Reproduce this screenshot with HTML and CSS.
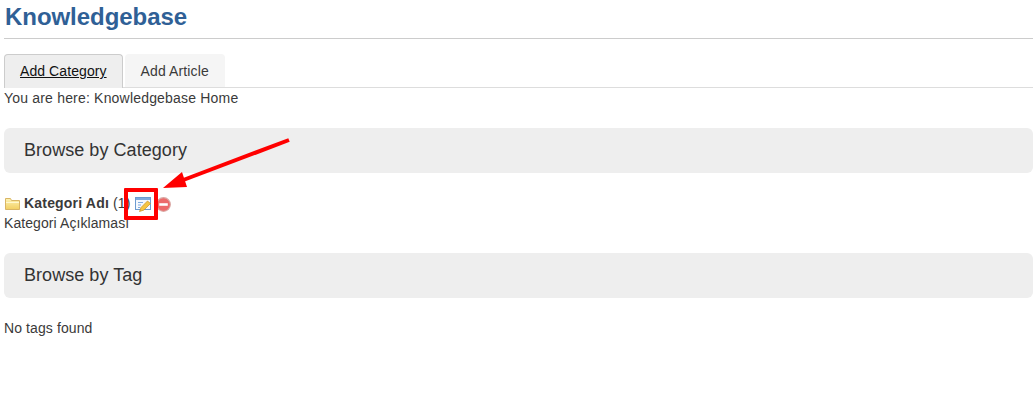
FILE: index.html
```html
<!DOCTYPE html>
<html>
<head>
  <title>Knowledgebase</title>
  <link rel="stylesheet" href="styles.css">
</head>
<body>
  <div class="page">
    <h1 class="page-title">Knowledgebase</h1>

    <ul class="tabs">
      <li class="tab active"><a href="#">Add Category</a></li>
      <li class="tab"><a href="#">Add Article</a></li>
    </ul>
    <div class="breadcrumb">You are here: Knowledgebase Home</div>

    <h2 class="section-head">Browse by Category</h2>
    <div class="category">
      <div class="category-row">
        <svg class="icon-folder" width="16" height="16" viewBox="0 0 16 16">
          <defs>
            <linearGradient id="folderFill" x1="0" y1="0" x2="0" y2="1">
              <stop offset="0" stop-color="#fdf3b4" />
              <stop offset="1" stop-color="#f2cf62" />
            </linearGradient>
          </defs>
          <path d="M1.5 3.5V14.5H15.5V5.5H7.5L6.5 3.5Z" fill="url(#folderFill)" stroke="#d9b565" />
          <path d="M2 7.5H15" stroke="#fff8d0" />
        </svg>
        <b>Kategori Adı</b>
        <span class="count">(1)</span>
        <span class="actions">
          <svg class="icon-edit" width="16" height="16" viewBox="0 0 16 16">
            <rect x="0.5" y="1.5" width="15" height="12" fill="#f4f8fd" stroke="#6b9bd0" />
            <rect x="1" y="2" width="14" height="2" fill="#7fabde" />
            <path d="M3 6.5H8M3 9H6M3 11.5H5" stroke="#7fabde" />
            <path d="M4.5 15.5L6 11.5L12.5 5L15.5 7.5L9 14Z" fill="#f5c542" stroke="#c98f24" stroke-width="0.7" />
          </svg>
          <svg class="icon-delete" width="15" height="15" viewBox="0 0 14 14">
            <circle cx="7" cy="7" r="6.4" fill="#ec6a6a" stroke="#d8a8a4" />
            <rect x="3" y="5.8" width="8" height="2.4" fill="#fff" />
          </svg>
        </span>
      </div>
      <div class="category-desc">Kategori Açıklaması</div>
    </div>

    <h2 class="section-head">Browse by Tag</h2>
    <p class="no-tags">No tags found</p>
  </div>

  <!-- screenshot annotation -->
  <div class="highlight-box"></div>
  <svg class="arrow" width="140" height="60" viewBox="0 0 140 60">
    <path d="M129 5L18 47" stroke="#ff0000" stroke-width="4" fill="none" />
    <path d="M3 53L22 37L27 52Z" fill="#ff0000" />
  </svg>
</body>
</html>
```

FILE: styles.css
```css
body {
  margin: 0;
  font-family: "Liberation Sans", Arial, sans-serif;
  font-size: 14px;
  line-height: 20px;
  letter-spacing: 0.19px;
  color: #3a3a3a;
  background: #fff;
}
.page {
  padding: 0 1px 0 4px;
}
.page-title {
  margin: 0 0 15px;
  padding: 5px 0 9px 1px;
  height: 24px;
  line-height: 24px;
  font-size: 24px;
  font-weight: bold;
  letter-spacing: -0.05px;
  color: #2f6096;
  border-bottom: 1px solid #ccc;
}
.tabs {
  display: flex;
  gap: 2px;
  list-style: none;
  margin: 0;
  padding: 0;
  height: 33px;
  border-bottom: 1px solid #ddd;
}
.tab a {
  display: block;
  height: 33px;
  box-sizing: border-box;
  padding: 7px 16px;
  color: #3a3a3a;
  letter-spacing: 0.12px;
  text-decoration: none;
  background: #f5f5f5;
  border-radius: 4px 4px 0 0;
}
.tab.active a {
  height: 34px;
  padding: 6px 15px;
  background: #eee;
  color: #111;
  letter-spacing: 0.08px;
  text-decoration: underline;
  border: 1px solid #ccc;
  border-bottom: none;
}
.breadcrumb {
  line-height: 20px;
}
.section-head {
  margin: 20px 0 0;
  padding: 0 20px;
  height: 45px;
  line-height: 44px;
  font-size: 18px;
  font-weight: normal;
  letter-spacing: 0.05px;
  color: #333;
  background: #eee;
  border-radius: 6px;
}
.category {
  margin: 20px 0;
}
.category-row {
  display: flex;
  align-items: center;
  height: 20px;
}
.category-desc {
  letter-spacing: 0.08px;
}
.icon-folder {
  margin-right: 4px;
}
.count {
  margin-left: 4px;
}
.actions {
  display: flex;
  align-items: center;
  gap: 5px;
  margin: 2px 0 0 4px;
}
.no-tags {
  margin: 20px 0 0;
  letter-spacing: 0.1px;
}
.highlight-box {
  position: absolute;
  left: 124px;
  top: 188px;
  width: 26px;
  height: 24px;
  border: 4px solid #ff0000;
  border-radius: 1px;
}
.arrow {
  position: absolute;
  left: 160px;
  top: 135px;
}
```
